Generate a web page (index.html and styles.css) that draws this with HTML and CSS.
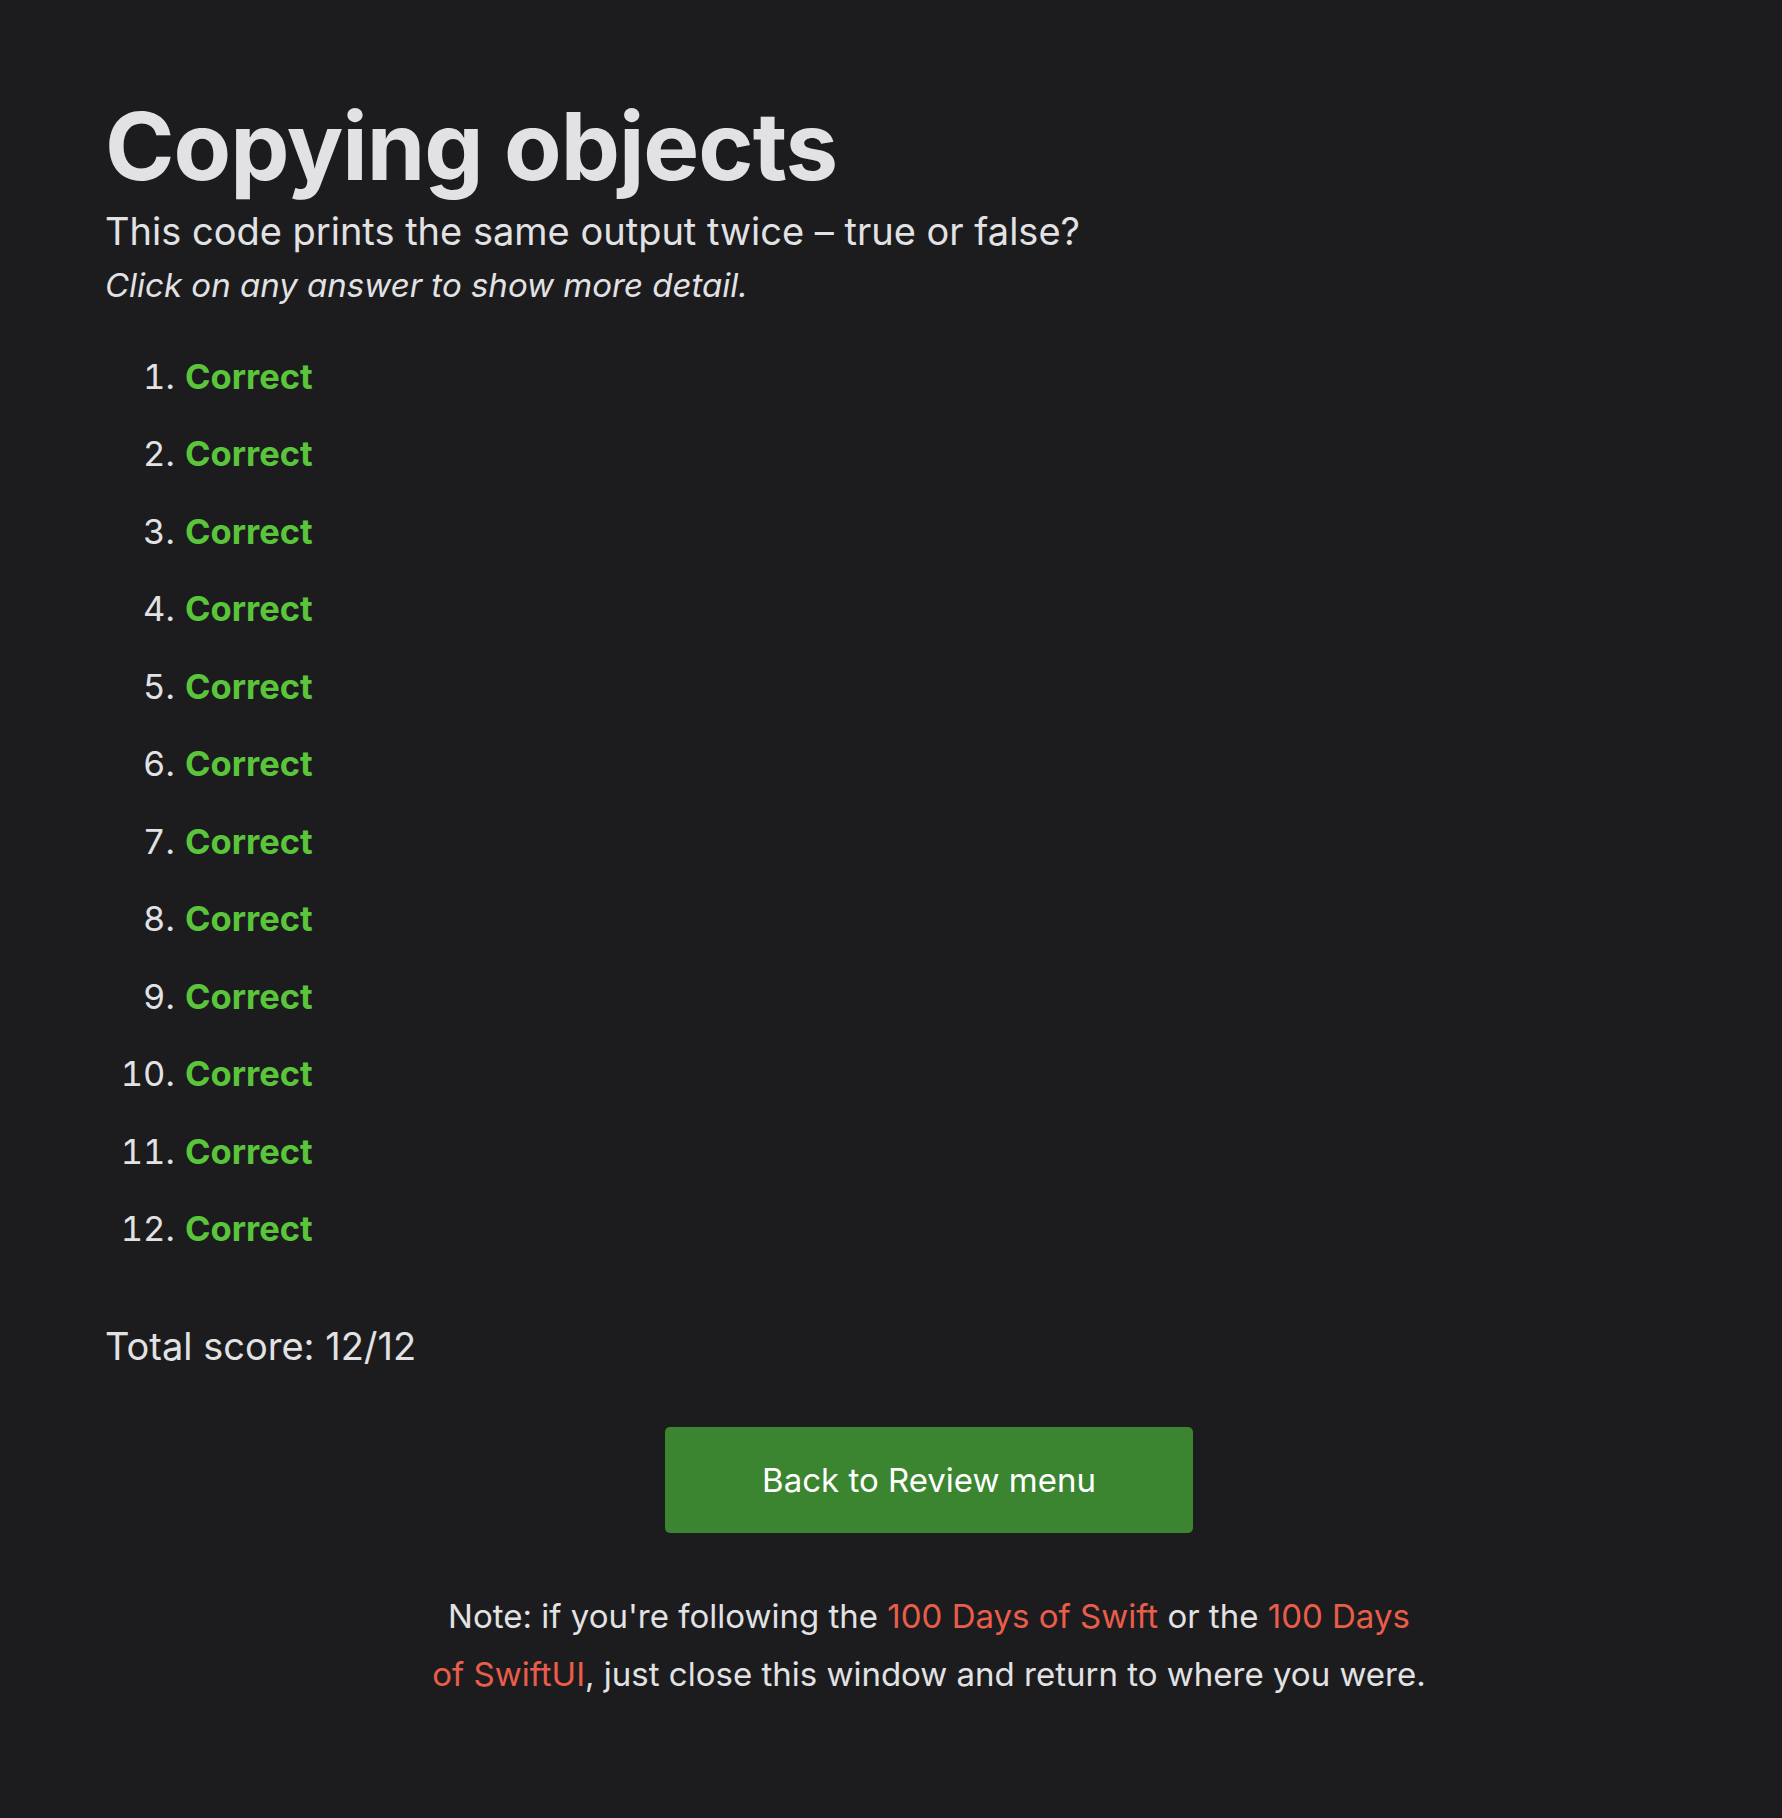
FILE: index.html
```html
<!DOCTYPE html>
<html lang="en">
<head>
<meta charset="utf-8">
<title>Copying objects</title>
<link rel="stylesheet" href="styles.css">
</head>
<body>
<main class="page">
  <h1 class="title">Copying objects</h1>
  <p class="question">This code prints the same output twice – true or false?</p>
  <p class="hint">Click on any answer to show more detail.</p>
  <ol class="answers">
    <li><span class="correct">Correct</span></li>
    <li><span class="correct">Correct</span></li>
    <li><span class="correct">Correct</span></li>
    <li><span class="correct">Correct</span></li>
    <li><span class="correct">Correct</span></li>
    <li><span class="correct">Correct</span></li>
    <li><span class="correct">Correct</span></li>
    <li><span class="correct">Correct</span></li>
    <li><span class="correct">Correct</span></li>
    <li><span class="correct">Correct</span></li>
    <li><span class="correct">Correct</span></li>
    <li><span class="correct">Correct</span></li>
  </ol>
  <p class="score">Total score: 12/12</p>
  <div class="actions">
    <a class="button" href="#">Back to Review menu</a>
  </div>
  <p class="note">Note: if you're following the <a href="#">100 Days of Swift</a> or the <a href="#">100 Days of SwiftUI</a>, just close this window and return to where you were.</p>
</main>
</body>
</html>
```

FILE: styles.css
```css
html, body {
  margin: 0;
  padding: 0;
  background: #1c1c1e;
}
body {
  font-family: Inter, "Noto Sans", "Liberation Sans", sans-serif;
  color: #e2e2e4;
}
.page {
  padding: 86px 29px 120px 105px;
}
.title {
  margin: 0;
  font-size: 94px;
  font-weight: 700;
  line-height: 120px;
  letter-spacing: -1px;
}
.question {
  margin: 0;
  font-size: 38px;
  line-height: 50px;
}
.hint {
  margin: 6px 0 0;
  font-size: 33px;
  font-style: italic;
  line-height: 46px;
}
.answers {
  margin: 29.5px 0 0;
  padding-left: 79px;
  font-size: 34.5px;
}
.answers li {
  line-height: 49.5px;
  padding: 14px 0 14px 1px;
}
.answers li::marker {
  color: #e2e2e4;
}
.correct {
  color: #5ac53a;
  font-weight: 700;
}
.score {
  margin: 52.5px 0 0;
  font-size: 38px;
  line-height: 53px;
}
.actions {
  display: flex;
  justify-content: center;
  margin-top: 54px;
}
.button {
  display: flex;
  align-items: center;
  justify-content: center;
  width: 528px;
  height: 106px;
  background: #3b8530;
  color: #ffffff;
  text-decoration: none;
  font-size: 33px;
  border-radius: 5px;
}
.note {
  max-width: 1000px;
  margin: 53.5px auto 0;
  text-align: center;
  font-size: 33px;
  line-height: 58px;
}
.note a {
  color: #ea5d4b;
  text-decoration: none;
}
```
